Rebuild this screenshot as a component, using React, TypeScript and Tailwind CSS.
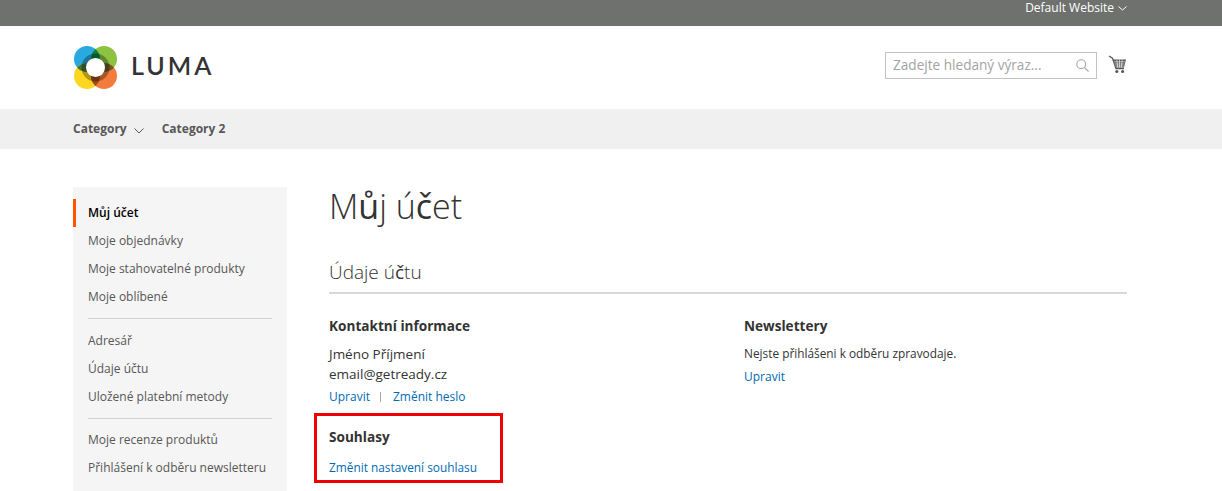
import React from "react";

const font = { fontFamily: '"Open Sans", sans-serif' };

function Logo() {
  const c = { tl: [13, 13], tr: [30, 13], bl: [13, 30], br: [30, 30] };
  return (
    <svg width="43" height="43" viewBox="0 0 43 43">
      <defs>
        <clipPath id="clipTl"><circle cx={c.tl[0]} cy={c.tl[1]} r="13" /></clipPath>
        <clipPath id="clipTr"><circle cx={c.tr[0]} cy={c.tr[1]} r="13" /></clipPath>
        <clipPath id="clipBl"><circle cx={c.bl[0]} cy={c.bl[1]} r="13" /></clipPath>
        <clipPath id="clipBr"><circle cx={c.br[0]} cy={c.br[1]} r="13" /></clipPath>
      </defs>
      <circle cx={c.tl[0]} cy={c.tl[1]} r="13" fill="#2aa8e0" />
      <circle cx={c.tr[0]} cy={c.tr[1]} r="13" fill="#8cc240" />
      <circle cx={c.bl[0]} cy={c.bl[1]} r="13" fill="#fdd71f" />
      <circle cx={c.br[0]} cy={c.br[1]} r="13" fill="#f37b3b" />
      <g clipPath="url(#clipTl)"><circle cx={c.tr[0]} cy={c.tr[1]} r="13" fill="#067f3f" /></g>
      <g clipPath="url(#clipTl)"><circle cx={c.bl[0]} cy={c.bl[1]} r="13" fill="#41743a" /></g>
      <g clipPath="url(#clipTr)"><circle cx={c.br[0]} cy={c.br[1]} r="13" fill="#6b5a26" /></g>
      <g clipPath="url(#clipBl)"><circle cx={c.br[0]} cy={c.br[1]} r="13" fill="#a14a1c" /></g>
      <circle cx="21.5" cy="21.5" r="14" fill="#000" opacity="0.3" />
      <circle cx="21.5" cy="21.5" r="9.5" fill="#fff" />
    </svg>
  );
}

function Cart() {
  return (
    <svg width="19" height="19" viewBox="0 0 19 19" fill="none">
      <path d="M1 1l3.5 2.2L8 13.5h8" stroke="#555" strokeWidth="1.3" />
      <path d="M5 4.5h13l-2 8H7.5z" fill="#555" />
      <path d="M6 6.8h11M6.7 9h9.7M7.3 11h8.6M8.8 4.5l1 8M11.5 4.5v8M14.2 4.5l-.8 8" stroke="#fff" strokeWidth="0.6" />
      <circle cx="8.8" cy="16.4" r="1.5" fill="#555" />
      <circle cx="14.6" cy="16.4" r="1.5" fill="#555" />
    </svg>
  );
}

function Chevron({ w, h, color }: { w: number; h: number; color: string }) {
  return (
    <svg width={w} height={h} viewBox={`0 0 ${w} ${h}`} fill="none">
      <path d={`M0.5 0.5L${w / 2} ${h - 1}L${w - 0.5} 0.5`} stroke={color} strokeWidth="1" />
    </svg>
  );
}

function SideItem({ children, active }: { children: React.ReactNode; active?: boolean }) {
  if (active)
    return (
      <div className="h-7 flex items-center pl-[12px] border-l-[3px] border-[#ff5501] text-[#000] font-semibold text-[12px]">
        {children}
      </div>
    );
  return <div className="h-7 flex items-center pl-[15px] text-[#575757] text-[12px]">{children}</div>;
}

export default function App() {
  return (
    <div className="w-[1222px] h-[491px] overflow-hidden bg-white" style={font}>
      <div className="h-[26px] bg-[#6e716e] flex justify-end pr-[95px]">
        <div className="flex items-center h-[16px] gap-[4px] text-[12px] leading-[16px] text-white">
          <span>Default Website</span>
          <Chevron w={9} h={5} color="#fff" />
        </div>
      </div>

      <header className="h-[83px] px-[74px] flex justify-between">
        <div className="flex items-center gap-[14px]">
          <div className="w-[43px] h-[43px]"><Logo /></div>
          <span className="text-[25px] font-semibold tracking-[3px] text-[#333] leading-none -mt-[4px]" style={{ fontFamily: "Lato, sans-serif" }}>LUMA</span>
        </div>
        <div className="flex items-start pt-[26px] pr-[21px] gap-[11px]">
          <div className="w-[212px] h-[27px] border border-[#c2c2c2] flex items-center justify-between pl-[7px] pr-[7px]">
            <span className="text-[13.6px] text-[#a3a3a3]">Zadejte hledaný výraz...</span>
            <svg width="13" height="13" viewBox="0 0 13 13" fill="none" stroke="#a8a8a8" strokeWidth="1.1">
              <circle cx="5.2" cy="5.2" r="4.4" />
              <path d="M8.4 8.4L12.5 12.5" />
            </svg>
          </div>
          <div className="mt-[3px]"><Cart /></div>
        </div>
      </header>

      <nav className="h-[40px] bg-[#f0f0f0] px-[73px] flex items-center gap-[18px] text-[12px] font-bold text-[#575757]">
        <div className="flex items-center gap-[7px]">
          <span>Category</span>
          <span className="pt-[3px]"><Chevron w={10} h={6} color="#575757" /></span>
        </div>
        <span>Category 2</span>
      </nav>

      <main className="px-[73px] pt-[38px] flex">
        <aside className="w-[214px] h-[304px] bg-[#f5f5f5] pt-[12px] shrink-0">
          <SideItem active>Můj účet</SideItem>
          <SideItem>Moje objednávky</SideItem>
          <SideItem>Moje stahovatelné produkty</SideItem>
          <SideItem>Moje oblíbené</SideItem>
          <div className="h-px bg-[#d1d1d1] mx-[15px] mt-[7px] mb-[8px]" />
          <SideItem>Adresář</SideItem>
          <SideItem>Údaje účtu</SideItem>
          <SideItem>Uložené platební metody</SideItem>
          <div className="h-px bg-[#d1d1d1] mx-[15px] mt-[7px] mb-[7px]" />
          <SideItem>Moje recenze produktů</SideItem>
          <SideItem>Přihlášení k odběru newsletteru</SideItem>
        </aside>

        <section className="ml-[42px] w-[798px]">
          <h1 className="text-[34px] font-light text-[#333] leading-[40px] -mt-[1px]">
            M<span className="font-normal">ů</span>j ú<span className="font-medium">č</span>et
          </h1>
          <div className="mt-[25px] h-[43px] border-b-2 border-[#d8d8d8] text-[19px] font-light text-[#333] leading-[24px] pt-[9px]">
            Údaje ú<span className="font-medium">č</span>tu
          </div>
          <div className="grid grid-cols-2 mt-[22px]">
            <div>
              <h2 className="text-[13.6px] font-bold text-[#333] leading-[20px]">Kontaktní informace</h2>
              <p className="mt-[8px] text-[13.5px] leading-[20px] text-[#333]">Jméno Příjmení<br />email@getready.cz</p>
              <div className="mt-[3px] flex items-center text-[12px] leading-[20px] text-[#006bb4]">
                <span>Upravit</span>
                <span className="ml-[10px] mr-[12px] h-[10px] w-px bg-[#a6a6a6]" />
                <span>Změnit heslo</span>
              </div>
              <div className="mt-[6px] w-[189px] h-[70px] -ml-[15px] pl-[12px] pt-[11px] border-[3px] border-[#f00000]">
                <h2 className="text-[13.6px] font-bold text-[#333] leading-[20px]">Souhlasy</h2>
                <div className="mt-[10px] text-[11.85px] leading-[20px] text-[#006bb4]">Změnit nastavení souhlasu</div>
              </div>
            </div>
            <div className="pl-[16px]">
              <h2 className="text-[13.6px] font-bold text-[#333] leading-[20px]">Newslettery</h2>
              <p className="mt-[7px] text-[11.85px] leading-[20px] text-[#333]">Nejste přihlášeni k odběru zpravodaje.</p>
              <div className="mt-[4px] text-[12px] leading-[20px] text-[#006bb4]">Upravit</div>
            </div>
          </div>
        </section>
      </main>
    </div>
  );
}
